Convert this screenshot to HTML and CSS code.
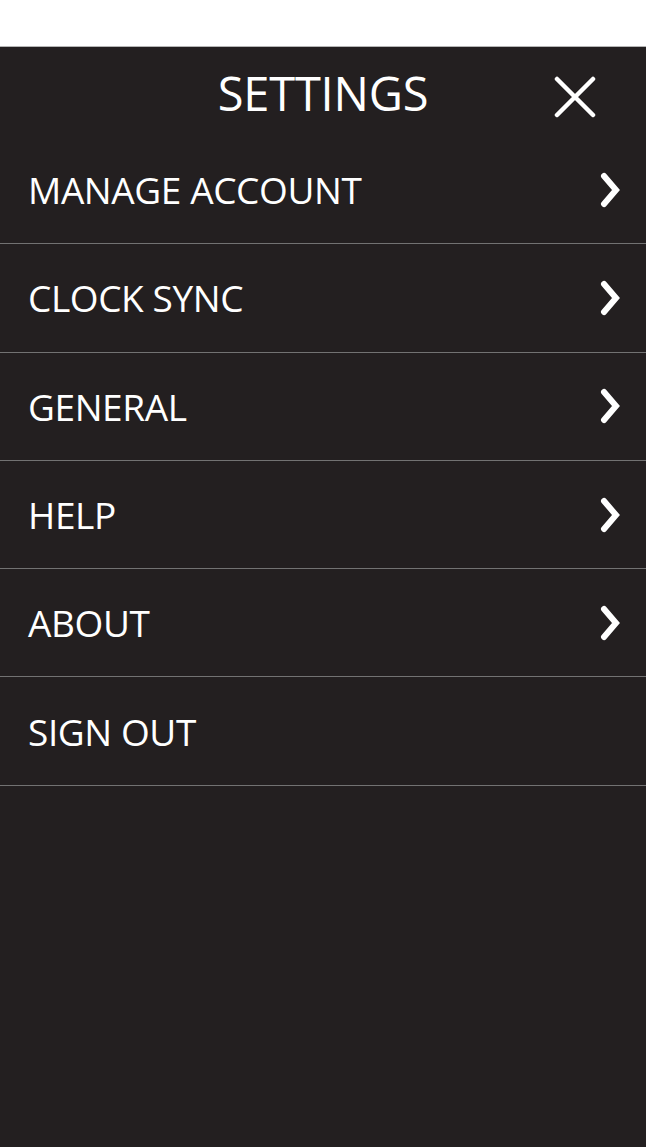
FILE: index.html
```html
<!DOCTYPE html>
<html>
<head>
<meta charset="utf-8">
<link rel="stylesheet" href="styles.css">
</head>
<body>
<div class="topbar"></div>
<div class="panel">
  <header class="header">
    <div></div>
    <h1 class="title">SETTINGS</h1>
    <button class="close" aria-label="Close">
      <svg width="42" height="42" viewBox="0 0 42 42"><path d="M3 3 L39 39 M39 3 L3 39" stroke="#fff" stroke-width="4.5" stroke-linecap="round" fill="none"/></svg>
    </button>
  </header>
  <ul class="menu">
    <li class="row"><span class="label">MANAGE ACCOUNT</span><svg class="chev" width="24" height="36" viewBox="0 0 24 36"><path d="M5 4 L17 18 L5 32" stroke="#fff" stroke-width="6" stroke-linecap="round" stroke-linejoin="miter" fill="none"/></svg></li>
    <li class="row"><span class="label">CLOCK SYNC</span><svg class="chev" width="24" height="36" viewBox="0 0 24 36"><path d="M5 4 L17 18 L5 32" stroke="#fff" stroke-width="6" stroke-linecap="round" stroke-linejoin="miter" fill="none"/></svg></li>
    <li class="row"><span class="label">GENERAL</span><svg class="chev" width="24" height="36" viewBox="0 0 24 36"><path d="M5 4 L17 18 L5 32" stroke="#fff" stroke-width="6" stroke-linecap="round" stroke-linejoin="miter" fill="none"/></svg></li>
    <li class="row"><span class="label">HELP</span><svg class="chev" width="24" height="36" viewBox="0 0 24 36"><path d="M5 4 L17 18 L5 32" stroke="#fff" stroke-width="6" stroke-linecap="round" stroke-linejoin="miter" fill="none"/></svg></li>
    <li class="row"><span class="label">ABOUT</span><svg class="chev" width="24" height="36" viewBox="0 0 24 36"><path d="M5 4 L17 18 L5 32" stroke="#fff" stroke-width="6" stroke-linecap="round" stroke-linejoin="miter" fill="none"/></svg></li>
    <li class="row"><span class="label">SIGN OUT</span></li>
  </ul>
</div>
</body>
</html>
```
FILE: styles.css
```css
html, body {
  margin: 0;
  padding: 0;
}
body {
  background: #231f20;
  font-family: "Open Sans", "Noto Sans", sans-serif;
  color: #fff;
  height: 1147px;
  overflow: hidden;
}
.topbar {
  height: 46px;
  background: #fff;
  border-bottom: 1px solid #b5b5b5;
}
.panel {
  background: #231f20;
}
.header {
  height: 89px;
  display: grid;
  grid-template-columns: 1fr auto 1fr;
  align-items: center;
}
.title {
  margin: 4px 0 0 0;
  font-size: 47px;
  font-weight: 400;
  letter-spacing: -0.2px;
  line-height: 1;
}
.close {
  justify-self: end;
  margin-right: 50px;
  margin-top: 10px;
  background: none;
  border: 0;
  padding: 0;
  display: flex;
}
.menu {
  list-style: none;
  margin: 0;
  padding: 0;
}
.row {
  box-sizing: border-box;
  height: 108.3px;
  border-bottom: 1.3px solid #727272;
  display: flex;
  align-items: center;
  justify-content: space-between;
  padding: 0 23px 0 28px;
}
.label {
  font-size: 37px;
  letter-spacing: -0.4px;
  line-height: 1;
}
.chev {
  display: block;
}
```
